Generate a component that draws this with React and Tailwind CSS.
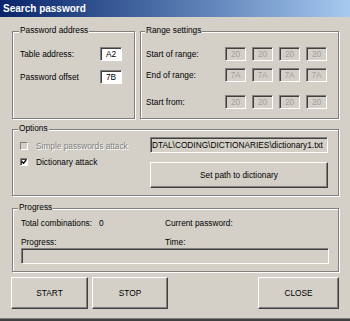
const sunken =
  "border border-t-[#808080] border-l-[#808080] border-b-white border-r-white shadow-[inset_1px_1px_0_#404040]";
const raised =
  "border border-t-white border-l-white border-b-[#404040] border-r-[#404040] shadow-[inset_-1px_-1px_0_#808080]";
const group =
  "relative border border-[#808080] shadow-[inset_1px_1px_0_#fff,1px_1px_0_#fff]";

const Legend = ({ children, left }) => (
  <span
    className={`absolute top-[-7px] bg-[#d4d0c8] px-[1px] leading-[10px] ${left}`}
  >
    {children}
  </span>
);

const Field = ({ value, disabled, width = "w-[21px]" }) => (
  <div
    className={`${sunken} ${width} h-[14px] flex items-center justify-center leading-none ${
      disabled ? "bg-[#d4d0c8] text-[#a0a0a0]" : "bg-white text-black"
    }`}
  >
    {value}
  </div>
);

const Checkbox = ({ checked, disabled }) => (
  <div
    className={`${sunken} w-[8px] h-[8px] shrink-0 flex items-center justify-center ${
      disabled ? "bg-[#d4d0c8] shadow-none" : "bg-white"
    }`}
  >
    {checked && (
      <svg width="6" height="6" viewBox="0 0 7 7">
        <polyline points="1,3 3,5 6,1" fill="none" stroke="#000" strokeWidth="1.6" />
      </svg>
    )}
  </div>
);

const Button = ({ children, width }) => (
  <button className={`${raised} ${width} h-[32px] bg-[#d4d0c8] text-black`}>
    {children}
  </button>
);

export default function App() {
  return (
    <div className="w-[350px] h-[321px] bg-[#d4d0c8] flex flex-col overflow-hidden font-['Liberation_Sans',Arial,sans-serif] text-[8.3px] text-black">
      <div className="h-[17px] shrink-0 flex items-center pl-[3px] bg-gradient-to-r from-[#0a246a] to-[#a6caf0]">
        <span className="text-white font-bold text-[10px] leading-none">Search password</span>
      </div>

      <div className="flex mt-[14px] ml-[12px] gap-[5px]">
        <div className={`${group} w-[123px] h-[88px] pt-[15px] pl-[7px]`}>
          <Legend left="left-[6px]">Password address</Legend>
          <div className="flex items-center h-[14px]">
            <span className="w-[80px]">Table address:</span>
            <Field value="A2" width="w-[22px]" />
          </div>
          <div className="flex items-center h-[14px] mt-[9px]">
            <span className="w-[80px]">Password offset</span>
            <Field value="7B" width="w-[22px]" />
          </div>
        </div>

        <div className={`${group} w-[199px] h-[88px] pt-[15px] pl-[5px]`}>
          <Legend left="left-[4px]">Range settings</Legend>
          <div className="flex items-center h-[14px]">
            <span className="w-[79px]">Start of range:</span>
            <div className="flex gap-[6px]">
              <Field value="20" disabled />
              <Field value="20" disabled />
              <Field value="20" disabled />
              <Field value="20" disabled />
            </div>
          </div>
          <div className="flex items-center h-[14px] mt-[7px]">
            <span className="w-[79px]">End of range:</span>
            <div className="flex gap-[6px]">
              <Field value="7A" disabled />
              <Field value="7A" disabled />
              <Field value="7A" disabled />
              <Field value="7A" disabled />
            </div>
          </div>
          <div className="flex items-center h-[14px] mt-[13px]">
            <span className="w-[79px]">Start from:</span>
            <div className="flex gap-[6px]">
              <Field value="20" disabled />
              <Field value="20" disabled />
              <Field value="20" disabled />
              <Field value="20" disabled />
            </div>
          </div>
        </div>
      </div>

      <div className={`${group} mt-[10px] ml-[12px] w-[327px] h-[67px] flex items-start pl-[7px]`}>
        <Legend left="left-[5px]">Options</Legend>
        <div className="w-[130px] pt-[12px]">
          <div className="flex items-center h-[8px] gap-[8px]">
            <Checkbox disabled />
            <span className="whitespace-nowrap text-[#808080] [text-shadow:1px_1px_0_#fff]">
              Simple passwords attack
            </span>
          </div>
          <div className="flex items-center h-[8px] gap-[8px] mt-[8px]">
            <Checkbox checked />
            <span className="whitespace-nowrap">Dictionary attack</span>
          </div>
        </div>
        <div className="w-[178px] pt-[7px]">
          <div className={`${sunken} h-[16px] bg-[#d4d0c8] flex items-center overflow-hidden pl-[1px]`}>
            <span className="whitespace-nowrap leading-none">
              DTAL\CODING\DICTIONARIES\dictionary1.txt
            </span>
          </div>
          <button className={`${raised} mt-[9px] w-full h-[26px] bg-[#d4d0c8] text-black`}>
            Set path to dictionary
          </button>
        </div>
      </div>

      <div className={`${group} mt-[12px] ml-[12px] w-[327px] h-[64px] pl-[8px] pt-[8px]`}>
        <Legend left="left-[5px]">Progress</Legend>
        <div className="flex items-center h-[12px]">
          <div className="w-[144px] flex">
            <span className="w-[78px]">Total combinations:</span>
            <span>0</span>
          </div>
          <span>Current password:</span>
        </div>
        <div className="flex items-center h-[12px] mt-[7px]">
          <span className="w-[144px]">Progress:</span>
          <span>Time:</span>
        </div>
        <div className={`${sunken} w-[308px] h-[16px] bg-[#d4d0c8] mt-[0px]`} />
      </div>

      <div className="flex mt-[5px] px-[11px]">
        <Button width="w-[77px]">START</Button>
        <div className="ml-[4px]">
          <Button width="w-[76px]">STOP</Button>
        </div>
        <div className="ml-auto">
          <Button width="w-[81px]">CLOSE</Button>
        </div>
      </div>

      <div className="flex-1" />
      <div className="h-[3px] shrink-0 border-t border-[#808080] bg-[#404040]" />
    </div>
  );
}
